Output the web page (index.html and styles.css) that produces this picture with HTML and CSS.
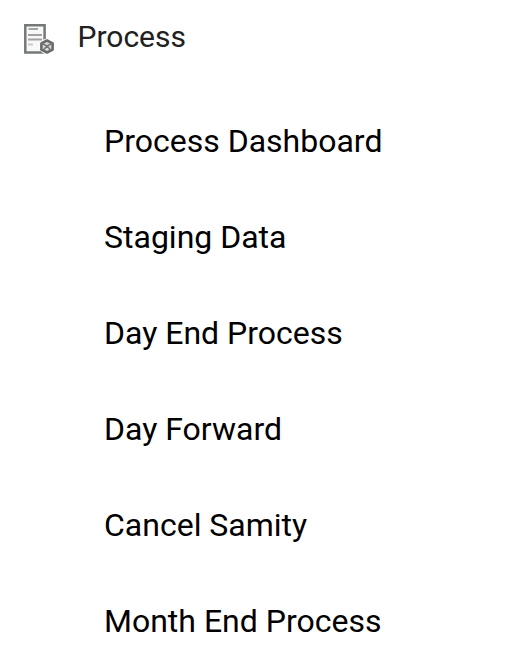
FILE: index.html
```html
<!DOCTYPE html>
<html lang="en">
<head>
<meta charset="utf-8">
<title>Process</title>
<link rel="stylesheet" href="styles.css">
</head>
<body>
<nav class="menu">
  <div class="menu-header">
    <svg class="menu-icon" viewBox="0 0 32 32" aria-hidden="true">
      <path d="M1.3 1.2H20.6V28.600H1.300Z" fill="#f8f8f8" stroke="#747878" stroke-width="2.500"/>
      <path d="M4.500 5H14M4 11H18M4 15.500H18" stroke="#a2a2a2" stroke-width="2.200"/>
      <path d="M4 20.500H9" stroke="#ccc" stroke-width="2"/>
      <circle cx="23" cy="22.500" r="7.800" fill="#fff"/>
      <path d="M23 16.500L28.600 19.300V25.700L23 28.500L17.400 25.700V19.300Z" fill="#ddd" stroke="#686b6b" stroke-width="2.600" stroke-linejoin="round"/>
      <path d="M18 19.500L23 22L28 19.500M23 22L19.500 26M23 22L26.500 26" fill="none" stroke="#777" stroke-width="1.800"/>
    </svg>
    <span class="menu-title">Process</span>
  </div>
  <ul class="menu-list">
    <li class="menu-item">Process Dashboard</li>
    <li class="menu-item">Staging Data</li>
    <li class="menu-item">Day End Process</li>
    <li class="menu-item">Day Forward</li>
    <li class="menu-item">Cancel Samity</li>
    <li class="menu-item">Month End Process</li>
  </ul>
</nav>
</body>
</html>
```
FILE: styles.css
```css
body {
  margin: 0;
  background: #fff;
  font-family: Roboto, sans-serif;
  overflow: hidden;
}
.menu-header {
  display: flex;
  align-items: flex-start;
  gap: 21.5px;
  height: 76px;
  box-sizing: border-box;
  padding: 17px 0 0 24px;
}
.menu-icon {
  width: 32px;
  height: 32px;
  margin-top: 7px;
  filter: blur(0.4px);
}
.menu-title {
  font-size: 30px;
  line-height: 40px;
  color: #212121;
}
.menu-list {
  margin: 0;
  padding: 17px 0 0 104px;
  list-style: none;
}
.menu-item {
  height: 96px;
  line-height: 96px;
  font-size: 32px;
  color: #000;
}
```
